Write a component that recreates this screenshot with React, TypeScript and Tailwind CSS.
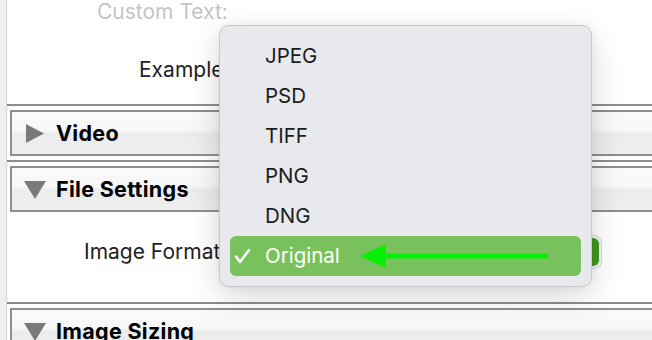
import React from 'react';

const formats = ['JPEG', 'PSD', 'TIFF', 'PNG', 'DNG', 'Original'];

const SectionHeader = ({ title, open }: { title: string; open: boolean }) => (
  <div className="shrink-0 ml-[3px] h-[46px] border-2 border-r-0 border-[#8e8e8e] bg-[linear-gradient(#fafafa_0%,#f7f7f7_45%,#ececec_50%,#eeeeee_100%)] flex items-center">
    <div className="w-[44px] flex justify-center pl-[2px]">
      {open ? (
        <svg width="22" height="19" viewBox="0 0 22 19">
          <polygon points="0,1 22,1 11,19" fill="#7a7a7a" />
        </svg>
      ) : (
        <svg width="18" height="19" viewBox="0 0 18 19">
          <polygon points="0,0 18,9.5 0,19" fill="#7a7a7a" />
        </svg>
      )}
    </div>
    <span className="text-[21.5px] font-bold tracking-[0.3px] text-black">{title}</span>
  </div>
);

const Divider = () => <div className="shrink-0 h-[2px] bg-[#8c8c8c]" />;
const Gap = () => <div className="shrink-0 h-[4px]" />;

const App = () => {
  return (
    <div className="w-[652px] h-[340px] overflow-hidden relative flex bg-white font-['Inter',sans-serif]">
      {/* Left strip */}
      <div className="w-[7px] shrink-0 bg-[#efefef] border-r border-[#d4d4d4]" />

      {/* Panel */}
      <div className="flex-1 flex flex-col">
        <div className="shrink-0 h-[104px]">
          <div className="pl-[90px] leading-[24px] text-[21px] text-[#c4c4c4]">Custom Text:</div>
          <div className="flex items-center mt-[34px] pl-[132px] h-[24px]">
            <span className="text-[21px] text-[#222]">Example:</span>
          </div>
        </div>

        <Divider />
        <Gap />
        <SectionHeader title="Video" open={false} />
        <Gap />
        <Divider />
        <Gap />
        <SectionHeader title="File Settings" open={true} />

        {/* File settings body */}
        <div className="shrink-0 h-[90px] flex items-center pl-[77px] pb-[10px]">
          <span className="text-[21px] text-[#222] whitespace-nowrap">Image Format:</span>
          <div className="ml-[8px] flex-1 mr-[50px] h-[34px] rounded-[8px] border border-[#d9d9d9] bg-[#f4f4f4] p-[2px] flex justify-end">
            <div className="w-[26px] h-full rounded-[6px] bg-[#3f9a1c]" />
          </div>
        </div>

        <Divider />
        <Gap />
        <SectionHeader title="Image Sizing" open={true} />
      </div>

      {/* Popup menu */}
      <div className="absolute left-[219px] top-[25px] w-[373px] h-[262px] rounded-[10px] bg-[#e8e9ec] border border-[#c8c8c8] shadow-[0_10px_32px_rgba(0,0,0,0.16),0_0_6px_rgba(0,0,0,0.06)] pt-[10px] px-[10px]">
        {formats.map(f =>
          f === 'Original' ? (
            <div key={f} className="relative h-[40px] rounded-[6px] bg-[#79c15c] flex items-center">
              <svg className="absolute left-[4px] top-[12px]" width="17" height="16" viewBox="0 0 17 16">
                <path d="M2 8.5 L6 14 L15 2" fill="none" stroke="#ffffff" strokeWidth="2.6" strokeLinecap="round" strokeLinejoin="round" />
              </svg>
              <span className="pl-[35px] text-[20.5px] text-white">{f}</span>
              <svg className="absolute left-[130px] top-[8px]" width="190" height="24" viewBox="0 0 190 24">
                <polygon points="0,12 26,0 26,24" fill="#06f006" />
                <rect x="22" y="9.5" width="166" height="5" rx="1" fill="#06f006" />
              </svg>
            </div>
          ) : (
            <div key={f} className="h-[40px] flex items-center pl-[35px] text-[20.5px] text-[#1c1c1c]">
              {f}
            </div>
          )
        )}
      </div>
    </div>
  );
};

export default App;
